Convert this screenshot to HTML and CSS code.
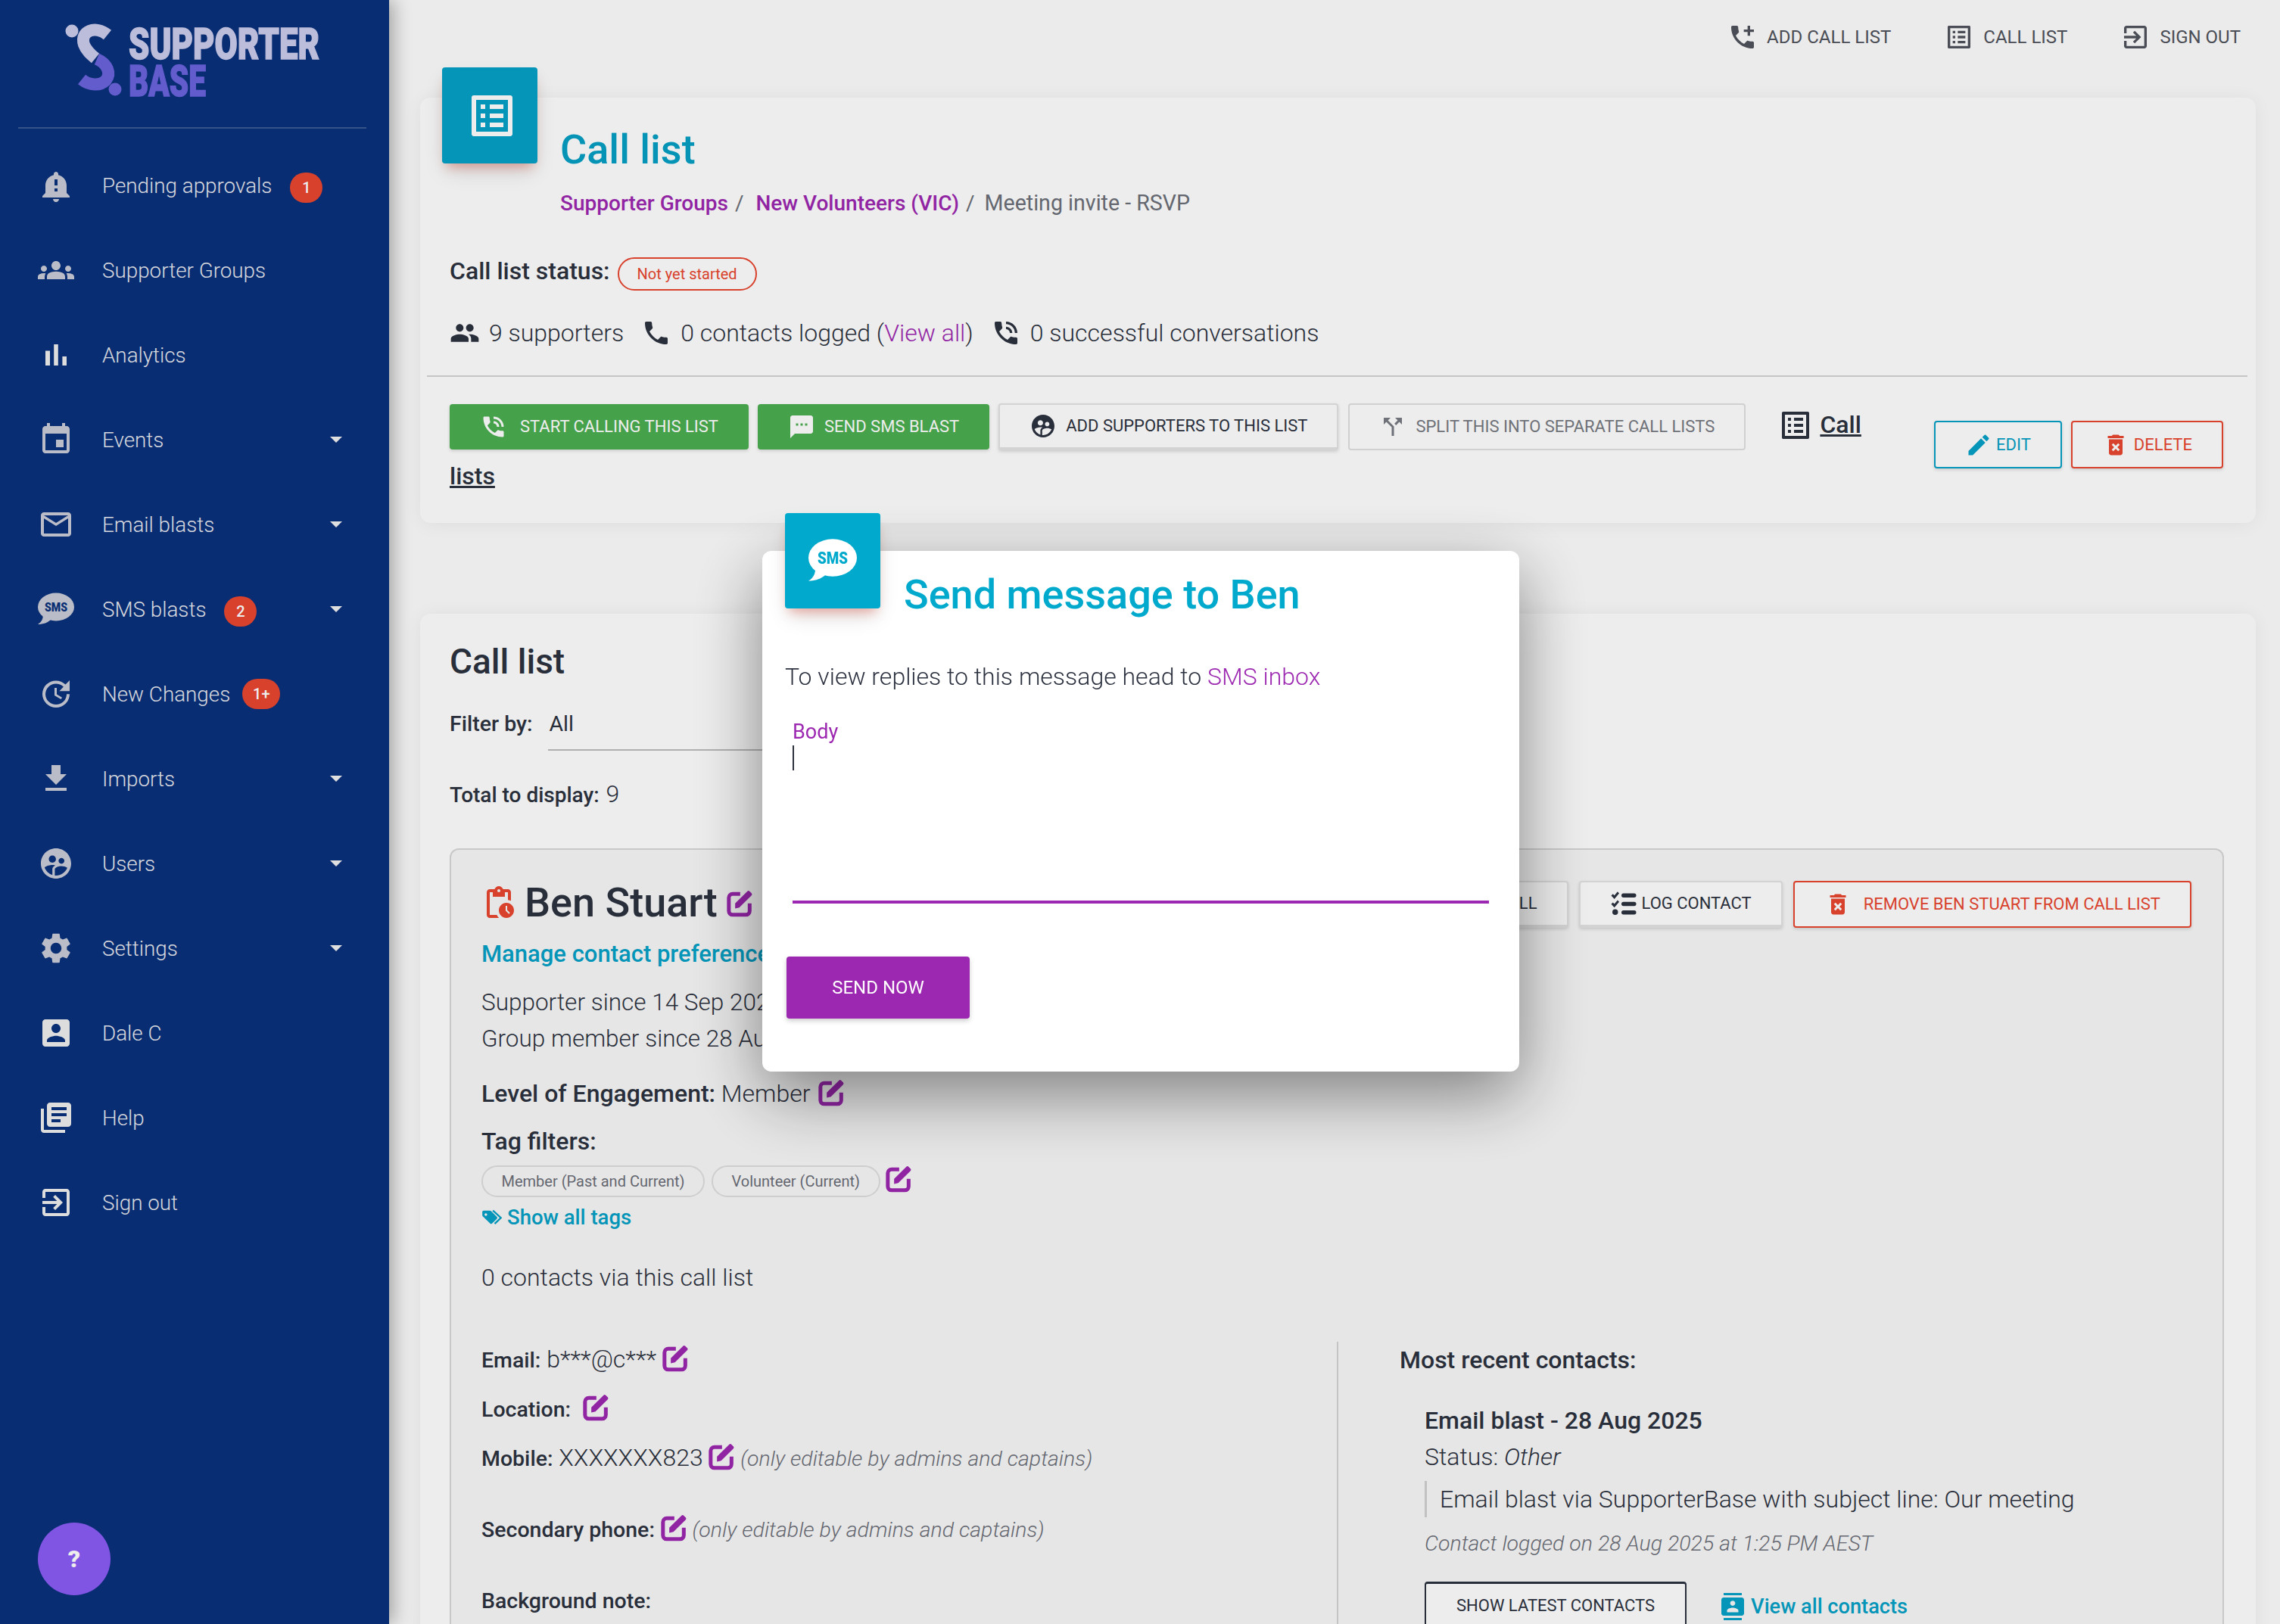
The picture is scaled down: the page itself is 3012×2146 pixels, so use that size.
FILE: index.html
```html
<!DOCTYPE html>
<html lang="en">

<head>
    <meta charset="UTF-8">
    <meta name="viewport" content="width=device-width, initial-scale=1.0">
    <title>Call list</title>
    <link rel="stylesheet" href="styles.css">
</head>

<body>

    <svg class="sprite" xmlns="http://www.w3.org/2000/svg">
        <symbol id="i-bell" viewBox="0 0 24 24"><path d="M12 23c1.1 0 1.99-.89 1.99-2h-3.98c0 1.11.89 2 1.99 2zm7-6v-5c0-3.35-2.36-6.15-5.5-6.83V4.5C13.5 3.67 12.83 3 12 3s-1.5.67-1.5 1.5v.67C7.36 5.85 5 8.65 5 12v5l-2 2v1h18v-1l-2-2zm-6-1h-2v-2h2v2zm0-4h-2V8h2v4z"/></symbol>
        <symbol id="i-groups" viewBox="0 0 24 24"><path d="M4 13c1.1 0 2-.9 2-2s-.9-2-2-2-2 .9-2 2 .9 2 2 2zm1.13 1.1c-.37-.06-.74-.1-1.13-.1-.99 0-1.93.21-2.78.58C.48 14.9 0 15.62 0 16.43V18h4.5v-1.61c0-.83.23-1.61.63-2.29zM20 13c1.1 0 2-.9 2-2s-.9-2-2-2-2 .9-2 2 .9 2 2 2zm4 3.43c0-.81-.48-1.53-1.22-1.85-.85-.37-1.79-.58-2.78-.58-.39 0-.76.04-1.13.1.4.68.63 1.46.63 2.29V18H24v-1.57zm-7.76-2.65c-1.17-.52-2.61-.9-4.24-.9-1.63 0-3.07.39-4.24.9C6.68 14.13 6 15.21 6 16.39V18h12v-1.61c0-1.18-.68-2.26-1.76-2.61zM12 12c1.66 0 3-1.34 3-3s-1.34-3-3-3-3 1.34-3 3 1.34 3 3 3z"/></symbol>
        <symbol id="i-chart" viewBox="0 0 24 24"><path d="M5 9.2h3V19H5zM10.6 5h2.8v14h-2.8zm5.6 8H19v6h-2.8z"/></symbol>
        <symbol id="i-event" viewBox="0 0 24 24"><path d="M17 12h-5v5h5v-5zM16 1v2H8V1H6v2H5c-1.11 0-1.99.9-1.99 2L3 19c0 1.1.89 2 2 2h14c1.1 0 2-.9 2-2V5c0-1.1-.9-2-2-2h-1V1h-2zm3 18H5V8h14v11z"/></symbol>
        <symbol id="i-mail" viewBox="0 0 24 24"><path d="M20 4H4c-1.1 0-1.99.9-1.99 2L2 18c0 1.1.9 2 2 2h16c1.1 0 2-.9 2-2V6c0-1.1-.9-2-2-2zm0 14H4V8l8 5 8-5v10zm-8-7L4 6h16l-8 5z"/></symbol>
        <symbol id="i-update" viewBox="0 0 24 24"><path d="M21 10.12h-6.78l2.74-2.82c-2.73-2.7-7.15-2.8-9.88-.1-2.73 2.71-2.73 7.08 0 9.79s7.15 2.71 9.88 0C18.32 15.65 19 14.08 19 12.1h2c0 1.98-.88 4.55-2.64 6.29-3.51 3.48-9.21 3.48-12.72 0-3.5-3.47-3.53-9.11-.02-12.58s9.14-3.47 12.65 0L21 3v7.12zM12.5 8v4.25l3.5 2.08-.72 1.21L11 13V8h1.5z"/></symbol>
        <symbol id="i-download" viewBox="0 0 24 24"><path d="M19 9h-4V3H9v6H5l7 7 7-7zM5 18v2h14v-2H5z"/></symbol>
        <symbol id="i-users" viewBox="0 0 24 24"><path d="M11.99 2c-5.52 0-10 4.48-10 10s4.48 10 10 10 10-4.48 10-10-4.48-10-10-10zm3.61 6.34c1.07 0 1.93.86 1.93 1.93 0 1.07-.86 1.93-1.93 1.93-1.07 0-1.93-.86-1.93-1.93-.01-1.07.86-1.93 1.93-1.93zm-6-1.58c1.3 0 2.36 1.06 2.36 2.36 0 1.3-1.06 2.36-2.36 2.36s-2.36-1.06-2.36-2.36c0-1.31 1.05-2.36 2.36-2.36zm0 9.13v3.75c-2.4-.75-4.3-2.6-5.14-4.96 1.05-1.12 3.67-1.69 5.14-1.69.53 0 1.2.08 1.9.22-1.64.87-1.9 2.02-1.9 2.68zM11.99 20c-.27 0-.53-.01-.79-.04v-4.07c0-1.42 2.94-2.13 4.4-2.13 1.07 0 2.92.39 3.84 1.15-1.17 2.97-4.06 5.09-7.45 5.09z"/></symbol>
        <symbol id="i-settings" viewBox="0 0 24 24"><path d="M19.14 12.94c.04-.3.06-.61.06-.94 0-.32-.02-.64-.07-.94l2.03-1.58a.49.49 0 0 0 .12-.61l-1.92-3.32a.488.488 0 0 0-.59-.22l-2.39.96c-.5-.38-1.03-.7-1.62-.94l-.36-2.54a.484.484 0 0 0-.48-.41h-3.84c-.24 0-.43.17-.47.41l-.36 2.54c-.59.24-1.13.57-1.62.94l-2.39-.96c-.22-.08-.47 0-.59.22L2.74 8.87c-.12.21-.08.47.12.61l2.03 1.58c-.05.3-.09.63-.09.94s.02.64.07.94l-2.03 1.58a.49.49 0 0 0-.12.61l1.92 3.32c.12.22.37.29.59.22l2.39-.96c.5.38 1.03.7 1.62.94l.36 2.54c.05.24.24.41.48.41h3.84c.24 0 .44-.17.47-.41l.36-2.54c.59-.24 1.13-.56 1.62-.94l2.39.96c.22.08.47 0 .59-.22l1.92-3.32c.12-.22.07-.47-.12-.61l-2.01-1.58zM12 15.6c-1.98 0-3.6-1.62-3.6-3.6s1.62-3.6 3.6-3.6 3.6 1.62 3.6 3.6-1.62 3.6-3.6 3.6z"/></symbol>
        <symbol id="i-account" viewBox="0 0 24 24"><path d="M3 5v14c0 1.1.89 2 2 2h14c1.1 0 2-.9 2-2V5c0-1.1-.9-2-2-2H5c-1.11 0-2 .9-2 2zm12 4c0 1.66-1.34 3-3 3s-3-1.34-3-3 1.34-3 3-3 3 1.34 3 3zm-9 8c0-2 4-3.1 6-3.1s6 1.1 6 3.1v1H6v-1z"/></symbol>
        <symbol id="i-books" viewBox="0 0 24 24"><path d="M4 6H2v14c0 1.1.9 2 2 2h14v-2H4V6zm16-4H8c-1.1 0-2 .9-2 2v12c0 1.1.9 2 2 2h12c1.1 0 2-.9 2-2V4c0-1.1-.9-2-2-2zm-1 9H9V9h10v2zm-4 4H9v-2h6v2zm4-8H9V5h10v2z"/></symbol>
        <symbol id="i-exit" viewBox="0 0 24 24"><path d="M10.09 15.59L11.5 17l5-5-5-5-1.41 1.41L12.67 11H3v2h9.67l-2.58 2.59zM19 3H5c-1.11 0-2 .9-2 2v4h2V5h14v14H5v-4H3v4c0 1.1.89 2 2 2h14c1.1 0 2-.9 2-2V5c0-1.1-.9-2-2-2z"/></symbol>
        <symbol id="i-talk" viewBox="0 0 24 24"><path d="M20 15.5c-1.25 0-2.45-.2-3.57-.57-.35-.11-.74-.03-1.02.24l-2.2 2.2c-2.83-1.44-5.15-3.75-6.59-6.59l2.2-2.21c.28-.26.36-.65.25-1C8.7 6.45 8.5 5.25 8.5 4c0-.55-.45-1-1-1H4c-.55 0-1 .45-1 1 0 9.39 7.61 17 17 17 .55 0 1-.45 1-1v-3.5c0-.55-.45-1-1-1zM19 12h2c0-4.97-4.03-9-9-9v2c3.87 0 7 3.13 7 7zm-4 0h2c0-2.76-2.24-5-5-5v2c1.66 0 3 1.34 3 3z"/></symbol>
        <symbol id="i-phone" viewBox="0 0 24 24"><path d="M6.62 10.79c1.44 2.83 3.76 5.14 6.59 6.59l2.2-2.2c.27-.27.67-.36 1.02-.24 1.12.37 2.33.57 3.57.57.55 0 1 .45 1 1V20c0 .55-.45 1-1 1-9.39 0-17-7.61-17-17 0-.55.45-1 1-1h3.5c.55 0 1 .45 1 1 0 1.25.2 2.45.57 3.57.11.35.03.74-.25 1.02l-2.2 2.2z"/></symbol>
        <symbol id="i-people" viewBox="0 0 24 24"><path d="M16 11c1.66 0 2.99-1.34 2.99-3S17.66 5 16 5c-1.66 0-3 1.34-3 3s1.34 3 3 3zm-8 0c1.66 0 2.99-1.34 2.99-3S9.66 5 8 5C6.34 5 5 6.34 5 8s1.34 3 3 3zm0 2c-2.33 0-7 1.17-7 3.5V19h14v-2.5c0-2.33-4.67-3.5-7-3.5zm8 0c-.29 0-.62.02-.97.05 1.16.84 1.97 1.97 1.97 3.45V19h6v-2.5c0-2.33-4.67-3.5-7-3.5z"/></symbol>
        <symbol id="i-chat" viewBox="0 0 24 24"><path d="M20 2H4c-1.1 0-1.99.9-1.99 2L2 22l4-4h14c1.1 0 2-.9 2-2V4c0-1.1-.9-2-2-2zM9 11H7V9h2v2zm4 0h-2V9h2v2zm4 0h-2V9h2v2z"/></symbol>
        <symbol id="i-list" viewBox="0 0 24 24"><path d="M19 5v14H5V5h14m1.1-2H3.9c-.5 0-.9.4-.9.9v16.2c0 .4.4.9.9.9h16.2c.4 0 .9-.5.9-.9V3.9c0-.5-.5-.9-.9-.9zM11 7h6v2h-6V7zm0 4h6v2h-6v-2zm0 4h6v2h-6zM7 7h2v2H7zm0 4h2v2H7zm0 4h2v2H7z"/></symbol>
        <symbol id="i-addcall" viewBox="0 0 24 24"><path d="M20 15.5c-1.25 0-2.45-.2-3.57-.57-.35-.11-.74-.03-1.02.24l-2.2 2.2c-2.83-1.44-5.15-3.75-6.59-6.59l2.2-2.21c.28-.26.36-.65.25-1C8.7 6.45 8.5 5.25 8.5 4c0-.55-.45-1-1-1H4c-.55 0-1 .45-1 1 0 9.39 7.61 17 17 17 .55 0 1-.45 1-1v-3.5c0-.55-.45-1-1-1zM21 6h-3V3h-2v3h-3v2h3v3h2V8h3z"/></symbol>
        <symbol id="i-split" viewBox="0 0 24 24"><path d="M14 4l2.29 2.29-2.88 2.88 1.42 1.42 2.88-2.88L20 10V4zm-4 0H4v6l2.29-2.29 4.71 4.7V20h2v-8.41l-5.29-5.3z"/></symbol>
        <symbol id="i-pencil" viewBox="0 0 24 24"><path d="M3 17.25V21h3.75L17.81 9.94l-3.75-3.75L3 17.25zM20.71 7.04c.39-.39.39-1.02 0-1.41l-2.34-2.34c-.39-.39-1.02-.39-1.41 0l-1.83 1.83 3.75 3.75 1.83-1.83z"/></symbol>
        <symbol id="i-delete" viewBox="0 0 24 24"><path d="M6 19c0 1.1.9 2 2 2h8c1.1 0 2-.9 2-2V7H6v12zm2.46-7.12l1.41-1.41L12 12.59l2.12-2.12 1.41 1.41L13.41 14l2.12 2.12-1.41 1.41L12 15.41l-2.12 2.12-1.41-1.41L10.59 14l-2.13-2.12zM15.5 4l-1-1h-5l-1 1H5v2h14V4z"/></symbol>
        <symbol id="i-pending" viewBox="0 0 24 24"><path d="M17 12c-2.76 0-5 2.24-5 5s2.24 5 5 5 5-2.24 5-5-2.24-5-5-5zm1.65 7.35L16.5 17.2V14h1v2.79l1.85 1.85-.7.71zM18 3h-3.18C14.4 1.84 13.3 1 12 1s-2.4.84-2.82 2H6c-1.1 0-2 .9-2 2v15c0 1.1.9 2 2 2h6.11c-.59-.57-1.07-1.25-1.42-2H6V5h2v3h8V5h2v5.08c.71.1 1.38.31 2 .6V5c0-1.1-.9-2-2-2zm-6 2c-.55 0-1-.45-1-1s.45-1 1-1 1 .45 1 1-.45 1-1 1z"/></symbol>
        <symbol id="i-contacts" viewBox="0 0 24 24"><path d="M20 0H4v2h16V0zM4 24h16v-2H4v2zM20 4H4c-1.1 0-2 .9-2 2v12c0 1.1.9 2 2 2h16c1.1 0 2-.9 2-2V6c0-1.1-.9-2-2-2zm-8 2.75c1.24 0 2.25 1.01 2.25 2.25s-1.01 2.25-2.25 2.25S9.75 10.24 9.75 9 10.76 6.75 12 6.75zM17 17H7v-1.5c0-1.67 3.33-2.5 5-2.5s5 .83 5 2.5V17z"/></symbol>
        <symbol id="i-edit" viewBox="0 0 24 24"><path d="M12.500 5H6.500A3 3 0 0 0 3.500 8v10.500a3 3 0 0 0 3 3H17a3 3 0 0 0 3-3V12.500" fill="none" stroke="currentColor" stroke-width="3"/><path d="M8.500 12.500L18.200 2.800a1.200 1.200 0 0 1 1.700 0l1.600 1.600a1.200 1.200 0 0 1 0 1.700L11.800 15.800 8.500 16.500z"/></symbol>
        <symbol id="i-checks" viewBox="0 0 24 24"><path d="M1 5l1.500-1.500 1.300 1.300L6.600 1.500 8 3 3.800 8zM1 12.500L2.500 11l1.300 1.300L6.600 9 8 10.500l-4.200 5zM4.500 17a2.500 2.500 0 1 1 0 5 2.500 2.500 0 0 1 0-5z"/><rect x="10" y="3" width="13" height="3.600" rx="1.800"/><rect x="10" y="10.500" width="13" height="3.600" rx="1.800"/><rect x="10" y="18" width="13" height="3.600" rx="1.800"/></symbol>
        <symbol id="i-tags" viewBox="0 0 24 24"><path d="M1 5.500A1.500 1.500 0 0 1 2.500 4h7c.5 0 1 .2 1.300.5l6.700 6.700c.6.600.6 1.500 0 2.100l-5.500 5.400c-.6.600-1.500.6-2.100 0L1.500 10.600C1.200 10.300 1 9.800 1 9.300zM5 7a1.500 1.500 0 1 0 0 3 1.500 1.500 0 0 0 0-3z"/><path d="M13 4l9 8.200-7 6.800" fill="none" stroke="currentColor" stroke-width="2"/></symbol>
    </svg>

    <div class="app">

        <nav class="sidebar">
            <div class="logo">
                <svg class="logo-art" viewBox="0 0 440 168" xmlns="http://www.w3.org/2000/svg">
                    <circle class="logo-light" cx="95" cy="41" r="8.500"/>
                    <path class="logo-stroke-light" d="M142 46C126 33 105 41 111 59c3 8 9 13 15 18"/>
                    <path class="logo-stroke-dark" d="M128 78c14 6 19 19 12 28-8 8-22 7-32-1"/>
                    <circle class="logo-dark" cx="152" cy="118" r="8.500"/>
                    <text class="logo-light logo-word" x="170" y="78" textLength="252" lengthAdjust="spacingAndGlyphs">SUPPORTER</text>
                    <text class="logo-dark logo-word" x="170" y="127" textLength="102" lengthAdjust="spacingAndGlyphs">BASE</text>
                </svg>
            </div>

            <a class="nav-item"><svg class="nav-icon"><use href="#i-bell"/></svg>Pending approvals<span class="badge">1</span></a>
            <a class="nav-item"><svg class="nav-icon"><use href="#i-groups"/></svg>Supporter Groups</a>
            <a class="nav-item"><svg class="nav-icon bright"><use href="#i-chart"/></svg>Analytics</a>
            <a class="nav-item"><svg class="nav-icon"><use href="#i-event"/></svg>Events<span class="caret"></span></a>
            <a class="nav-item"><svg class="nav-icon"><use href="#i-mail"/></svg>Email blasts<span class="caret"></span></a>
            <a class="nav-item">
                <svg class="nav-icon" viewBox="0 0 48 48"><ellipse cx="24" cy="21" rx="24" ry="18.500"/><path d="M7 30c0 7-2 11-7 14 7 0 13-2 18-7z"/><text class="sms-word sms-word-nav" x="9" y="27" textLength="30" lengthAdjust="spacingAndGlyphs">SMS</text></svg>
                SMS blasts<span class="badge">2</span><span class="caret"></span>
            </a>
            <a class="nav-item"><svg class="nav-icon"><use href="#i-update"/></svg>New Changes<span class="badge badge-tight">1+</span></a>
            <a class="nav-item"><svg class="nav-icon"><use href="#i-download"/></svg>Imports<span class="caret"></span></a>
            <a class="nav-item"><svg class="nav-icon"><use href="#i-users"/></svg>Users<span class="caret"></span></a>
            <a class="nav-item"><svg class="nav-icon"><use href="#i-settings"/></svg>Settings<span class="caret"></span></a>
            <a class="nav-item"><svg class="nav-icon bright"><use href="#i-account"/></svg>Dale C</a>
            <a class="nav-item"><svg class="nav-icon bright"><use href="#i-books"/></svg>Help</a>
            <a class="nav-item"><svg class="nav-icon bright"><use href="#i-exit"/></svg>Sign out</a>

            <button class="help-btn">?</button>
        </nav>

        <main class="main">

            <div class="top-nav">
                <a class="top-link"><svg class="top-icon"><use href="#i-addcall"/></svg>ADD CALL LIST</a>
                <a class="top-link"><svg class="top-icon"><use href="#i-list"/></svg>CALL LIST</a>
                <a class="top-link"><svg class="top-icon"><use href="#i-exit"/></svg>SIGN OUT</a>
            </div>

            <section class="card">
                <div class="card-head">
                    <div class="tile"><svg class="tile-icon"><use href="#i-list"/></svg></div>
                    <div>
                        <h1 class="page-title">Call list</h1>
                        <div class="crumbs">
                            <a class="link">Supporter Groups</a><span class="crumb-sep">/</span>
                            <a class="link">New Volunteers (VIC)</a><span class="crumb-sep">/</span>
                            <span class="crumb-here">Meeting invite - RSVP</span>
                        </div>
                    </div>
                </div>

                <div class="status-row">
                    <strong class="status-label">Call list status:</strong>
                    <span class="pill">Not yet started</span>
                </div>

                <div class="stats">
                    <svg class="stat-icon"><use href="#i-people"/></svg><span class="stat-text">9 supporters</span>
                    <svg class="stat-icon"><use href="#i-phone"/></svg><span class="stat-text">0 contacts logged (<a class="link">View all</a>)</span>
                    <svg class="stat-icon"><use href="#i-talk"/></svg><span class="stat-text">0 successful conversations</span>
                </div>

                <hr class="rule">

                <div class="actions">
                    <div class="actions-left">
                        <a class="btn btn-green btn-start"><svg class="btn-icon"><use href="#i-talk"/></svg>START CALLING THIS LIST</a><a class="btn btn-green"><svg class="btn-icon"><use href="#i-chat"/></svg>SEND SMS BLAST</a><a class="btn btn-plain btn-add"><svg class="btn-icon"><use href="#i-users"/></svg>ADD SUPPORTERS TO THIS LIST</a><a class="btn btn-off"><svg class="btn-icon"><use href="#i-split"/></svg>SPLIT THIS INTO SEPARATE CALL LISTS</a><svg class="call-icon"><use href="#i-list"/></svg><span class="call-link">Call</span> <span class="call-link">lists</span>
                    </div>
                    <div class="actions-right">
                        <a class="btn btn-cyan"><svg class="btn-icon"><use href="#i-pencil"/></svg>EDIT</a>
                        <a class="btn btn-red btn-delete"><svg class="btn-icon"><use href="#i-delete"/></svg>DELETE</a>
                    </div>
                </div>
            </section>

            <section class="card card-list">
                <h2 class="list-title">Call list</h2>
                <div class="filter-row">
                    <strong>Filter by:</strong>
                    <div class="filter-select">All</div>
                </div>
                <div class="total-row"><strong>Total to display:</strong> <span class="total-num">9</span></div>

                <article class="person">
                    <div class="person-head">
                        <svg class="pending-icon"><use href="#i-pending"/></svg>
                        <h3 class="person-name">Ben Stuart</h3>
                        <svg class="edit-icon"><use href="#i-edit"/></svg>
                        <div class="person-btns">
                            <a class="btn btn-plain btn-tall">CALL</a>
                            <a class="btn btn-plain btn-tall btn-log"><svg class="log-icon"><use href="#i-checks"/></svg>LOG CONTACT</a>
                            <a class="btn btn-red btn-tall btn-remove"><svg class="btn-icon"><use href="#i-delete"/></svg>REMOVE BEN STUART FROM CALL LIST</a>
                        </div>
                    </div>

                    <a class="manage-link">Manage contact preferences</a>
                    <div class="since">Supporter since 14 Sep 2021</div>
                    <div class="since">Group member since 28 Aug 2025</div>

                    <div class="level"><strong>Level of Engagement:</strong> Member <svg class="edit-icon"><use href="#i-edit"/></svg></div>

                    <div class="tag-title">Tag filters:</div>
                    <div class="chips">
                        <span class="chip">Member (Past and Current)</span>
                        <span class="chip">Volunteer (Current)</span>
                        <svg class="edit-icon chip-edit"><use href="#i-edit"/></svg>
                    </div>
                    <a class="tags-link"><svg class="tags-icon"><use href="#i-tags"/></svg>Show all tags</a>

                    <div class="via">0 contacts via this call list</div>

                    <div class="details">
                        <div class="details-left">
                            <div class="detail"><strong>Email:</strong> b***@c*** <svg class="edit-icon"><use href="#i-edit"/></svg></div>
                            <div class="detail"><strong>Location:</strong> <svg class="edit-icon edit-gap"><use href="#i-edit"/></svg></div>
                            <div class="detail"><strong>Mobile:</strong> XXXXXXX823 <svg class="edit-icon"><use href="#i-edit"/></svg> <em class="hint">(only editable by admins and captains)</em></div>
                            <div class="detail detail-far"><strong>Secondary phone:</strong> <svg class="edit-icon"><use href="#i-edit"/></svg> <em class="hint">(only editable by admins and captains)</em></div>
                            <div class="detail detail-far"><strong>Background note:</strong></div>
                        </div>
                        <div class="details-right">
                            <div class="recent-title">Most recent contacts:</div>
                            <div class="contact">
                                <div class="contact-title">Email blast - 28 Aug 2025</div>
                                <div class="contact-status">Status: <em>Other</em></div>
                                <blockquote class="contact-quote">Email blast via SupporterBase with subject line: Our meeting</blockquote>
                                <div class="contact-logged">Contact logged on 28 Aug 2025 at 1:25 PM AEST</div>
                                <div class="contact-foot">
                                    <a class="btn btn-outline">SHOW LATEST CONTACTS</a>
                                    <a class="contacts-link"><svg class="contacts-icon"><use href="#i-contacts"/></svg>View all contacts</a>
                                </div>
                            </div>
                        </div>
                    </div>
                </article>
            </section>
        </main>
    </div>

    <!-- Modal -->
    <div class="backdrop">
        <div class="modal">
            <div class="modal-head">
                <div class="tile tile-modal">
                    <svg class="tile-sms" viewBox="0 0 48 48"><ellipse cx="24" cy="21" rx="24" ry="18.500"/><path d="M7 30c0 7-2 11-7 14 7 0 13-2 18-7z"/><text class="sms-word sms-word-tile" x="9" y="27" textLength="30" lengthAdjust="spacingAndGlyphs">SMS</text></svg>
                </div>
                <h2 class="modal-title">Send message to Ben</h2>
            </div>
            <p class="modal-note">To view replies to this message head to <a class="link">SMS inbox</a></p>
            <div class="field">
                <label class="field-label">Body</label>
                <span class="field-caret"></span>
            </div>
            <button class="send-btn">SEND NOW</button>
        </div>
    </div>

</body>

</html>
```

FILE: styles.css
```css
html, body {
    height: 100%;
    overflow: hidden;
}

body {
    margin: 0;
    font-family: Roboto, "Liberation Sans", sans-serif;
    font-weight: 300;
    font-size: 32px;
    color: #2d3240;
    background: #fdfdfd;
}

strong {
    font-weight: 500;
}

.sprite {
    display: none;
}

svg {
    fill: currentColor;
    flex: none;
}

.app {
    display: flex;
    height: 100vh;
}

/* Sidebar */
.sidebar {
    flex: 0 0 514px;
    display: flex;
    flex-direction: column;
    background: #0a317b;
    color: #e6e8ef;
    font-size: 27.8px;
    box-shadow: 6px 0 22px rgba(0, 0, 0, 0.3);
    position: relative;
    z-index: 1;
}

.logo {
    height: 168px;
    margin: 0 30px 19px 24px;
    border-bottom: 2px solid #3a5a94;
}

.logo-art {
    display: block;
    width: 440px;
    height: 168px;
    margin-left: -24px;
    overflow: visible;
}

.logo-light { fill: #cbcbec; }
.logo-dark { fill: #6a63dd; }

.logo-stroke-light, .logo-stroke-dark {
    fill: none;
    stroke-width: 16px;
}

.logo-stroke-light { stroke: #cbcbec; }
.logo-stroke-dark { stroke: #6a63dd; }

.logo-word {
    font-size: 57px;
    font-weight: 900;
    stroke-width: 1.5px;
}

.logo-word.logo-light { stroke: #cbcbec; }
.logo-word.logo-dark { stroke: #6a63dd; }

.nav-item {
    display: flex;
    align-items: center;
    height: 112px;
    padding: 0 62px 0 50px;
}

.nav-icon {
    width: 48px;
    height: 48px;
    margin-right: 37px;
    color: #c9ccd8;
}

.nav-icon.bright {
    color: #eeeeee;
}

.sms-word {
    font-weight: 900;
    font-size: 16px;
}

.sms-word-nav { fill: #0a317b; }
.sms-word-tile { fill: #01aacd; }

.badge {
    display: flex;
    align-items: center;
    justify-content: center;
    min-width: 43px;
    height: 40px;
    margin: 6px 0 0 24px;
    padding: 0 4px;
    box-sizing: border-box;
    border-radius: 20px;
    background: #e9462f;
    color: #fff;
    font-size: 20px;
    font-weight: 500;
}

.badge-tight {
    margin-top: 0;
    margin-left: 16px;
    width: 50px;
}

.caret {
    margin-left: auto;
    border-left: 8px solid transparent;
    border-right: 8px solid transparent;
    border-top: 8px solid #f0f0f0;
}

.help-btn {
    width: 96px;
    height: 96px;
    margin: auto 0 38px 50px;
    border: none;
    border-radius: 50%;
    background: #8b5cf6;
    color: #fff;
    font-family: inherit;
    font-size: 32px;
    font-weight: 900;
}

/* Main column */
.main {
    flex: 1;
    min-width: 0;
    padding: 0 32px 0 41px;
}

.top-nav {
    display: flex;
    justify-content: flex-end;
    align-items: center;
    gap: 70px;
    height: 98px;
    padding-right: 20px;
    margin-bottom: 31px;
    font-size: 24px;
    font-weight: 400;
    color: #50535c;
}

.top-link {
    display: flex;
    align-items: center;
    gap: 12px;
}

.top-icon {
    width: 40px;
    height: 40px;
}

.card {
    background: #ffffff;
    border-radius: 14px;
    box-shadow: 0 2px 24px rgba(0, 0, 0, 0.06);
    padding-bottom: 28px;
}

.card-head {
    display: flex;
    gap: 30px;
    padding-left: 29px;
}

.tile {
    flex: none;
    display: flex;
    align-items: center;
    justify-content: center;
    width: 126px;
    height: 127px;
    margin-top: -40px;
    border-radius: 4px;
    background: #06a1c6;
    box-shadow: 0 10px 14px -6px rgba(233, 70, 47, 0.4), 0 14px 28px -6px rgba(0, 0, 0, 0.16);
    color: #fff;
}

.tile-icon {
    width: 72px;
    height: 72px;
    margin-left: 5px;
}

.page-title {
    margin: 37px 0 18px;
    font-size: 54px;
    line-height: 64px;
    font-weight: 500;
    color: #069fc4;
}

.link {
    color: #9c27b0;
}

.crumbs {
    display: flex;
    align-items: center;
    height: 40px;
    font-size: 28px;
    font-weight: 500;
}

.crumb-sep {
    margin: 0 16px 0 9px;
    font-weight: 400;
    color: #6c6f78;
}

.crumb-here {
    margin-left: -3px;
    font-size: 28.600px;
    font-weight: 400;
    color: #6c6f78;
}

.status-row {
    display: flex;
    align-items: flex-start;
    gap: 10px;
    margin: 52px 0 0 39px;
}

.status-label {
    font-size: 32px;
    line-height: 36px;
}

.pill {
    display: flex;
    align-items: center;
    height: 44px;
    box-sizing: border-box;
    padding: 0 24px;
    border: 2px solid #e9462f;
    border-radius: 22px;
    font-size: 20px;
    font-weight: 400;
    color: #e9462f;
}

.stats {
    display: flex;
    align-items: center;
    height: 48px;
    margin: 32px 0 0 39px;
}

.stat-icon {
    width: 40px;
    height: 40px;
    margin-right: 12px;
    color: #2d3240;
}

.stat-text {
    margin-right: 23px;
}

.rule {
    height: 2px;
    margin: 32px 11px 0 9px;
    border: none;
    background: #d4d4d4;
}

.actions {
    display: flex;
    align-items: flex-start;
    margin: 29px 43px 0 39px;
}

.actions-left {
    flex: 0 0 1880px;
    line-height: 68px;
}

.actions-right {
    display: flex;
    gap: 12px;
    margin: 29px 0 0 auto;
}

.btn {
    display: inline-flex;
    align-items: center;
    gap: 12px;
    height: 60px;
    box-sizing: border-box;
    padding: 0 40px;
    margin-right: 12px;
    border-radius: 4px;
    font-size: 22px;
    font-weight: 400;
    line-height: 1;
    white-space: nowrap;
    vertical-align: middle;
}

.btn-start {
    gap: 17px;
}

.btn-icon {
    width: 36px;
    height: 36px;
}

.btn-green {
    background: #4caf50;
    color: #fff;
    box-shadow: 0 2px 4px rgba(0, 0, 0, 0.14);
}

.btn-plain {
    height: 62px;
    background: #fff;
    border: 2px solid #e3e3e3;
    border-bottom-width: 4px;
    box-shadow: 0 2px 4px rgba(0, 0, 0, 0.14);
}

.btn-add {
    padding: 0 39px;
}

.btn-off {
    height: 62px;
    padding: 0 39px;
    margin: 0 42px 0 1px;
    background: #fff;
    border: 2px solid #e0e0e0;
    color: #777a82;
}

.btn-cyan, .btn-red {
    height: 63px;
    margin: 0;
    background: #fff;
    box-shadow: 0 2px 4px rgba(0, 0, 0, 0.14);
    gap: 5px;
}

.btn-cyan {
    padding: 0 39px;
    border: 2px solid #06a1c6;
    color: #06a1c6;
}

.btn-red {
    padding: 0 39px;
    border: 2px solid #e9462f;
    color: #e9462f;
}

.btn-delete {
    gap: 6px;
}

.call-icon {
    width: 48px;
    height: 48px;
    margin-right: 8px;
    vertical-align: -14px;
}

.call-link {
    font-weight: 500;
    text-decoration: underline;
}

.card-list {
    margin-top: 120px;
    padding: 35px 42px 0 39px;
    height: 1400px;
    box-sizing: border-box;
}

.list-title {
    margin: 0;
    font-size: 46px;
    line-height: 56px;
    font-weight: 500;
}

.filter-row {
    display: flex;
    gap: 21px;
    margin-top: 35px;
    font-size: 28.500px;
    line-height: 40px;
}

.filter-select {
    width: 500px;
    height: 53px;
    border-bottom: 2px solid #bdbdbd;
    padding-left: 1px;
    font-weight: 400;
}

.total-row {
    margin-top: 37px;
    font-size: 28px;
    line-height: 40px;
}

.total-num {
    margin-left: 2px;
    font-size: 32px;
}

.person {
    margin-top: 50px;
    padding: 40px 41px 0 40px;
    background: #f8f8f8;
    border: 2px solid #d8d8d8;
    border-radius: 12px;
    height: 1200px;
}

.person-head {
    display: flex;
    align-items: flex-start;
    height: 63px;
}

.pending-icon {
    width: 48px;
    height: 48px;
    margin: 6px 10px 0 -1px;
    color: #e9462f;
}

.person-name {
    margin: 0;
    font-size: 54px;
    line-height: 60px;
    font-weight: 500;
}

.edit-icon {
    width: 40px;
    height: 40px;
    color: #9c27b0;
    vertical-align: -7px;
}

.person-head .edit-icon {
    margin: 10px 0 0 9px;
}

.person-btns {
    display: flex;
    gap: 14px;
    margin: 1px 0 0 auto;
}

.btn-tall {
    height: 62px;
    margin: 0;
}

.btn-log {
    gap: 5px;
    padding: 0 39px;
}

.log-icon {
    width: 36px;
    height: 36px;
}

.btn-remove {
    gap: 16px;
}

.manage-link {
    display: block;
    margin-top: 15px;
    font-size: 31px;
    line-height: 40px;
    font-weight: 500;
    color: #06a1c6;
}

.since {
    font-size: 31.500px;
    line-height: 48px;
}

.manage-link + .since {
    margin-top: 20px;
}

.level {
    height: 48px;
    margin-top: 24px;
    font-size: 32px;
    line-height: 48px;
}

.tag-title {
    margin-top: 19px;
    font-size: 32px;
    line-height: 40px;
    font-weight: 500;
}

.chips {
    display: flex;
    align-items: center;
    gap: 9px;
    margin-top: 12px;
}

.chip {
    display: flex;
    align-items: center;
    height: 42px;
    box-sizing: border-box;
    padding: 0 24.500px;
    border: 2px solid #dedede;
    border-radius: 21px;
    font-size: 20px;
    font-weight: 400;
    color: #6c6f78;
}

.chip-edit {
    margin: -8px 0 0 -5px;
}

.tags-link {
    display: flex;
    align-items: center;
    gap: 6px;
    margin-top: 9px;
    font-size: 27.500px;
    line-height: 36px;
    font-weight: 500;
    color: #06a1c6;
}

.tags-icon {
    width: 28px;
    height: 28px;
}

.via {
    margin-top: 39px;
    line-height: 44px;
}

.details {
    display: flex;
    margin-top: 63px;
}

.details-left {
    flex: 0 0 1130px;
    border-right: 2px solid #d4d4d4;
    padding-top: 1px;
    height: 400px;
}

.detail {
    height: 44px;
    margin-bottom: 21px;
    line-height: 44px;
}

.detail strong {
    font-size: 28.500px;
}

.detail .edit-icon {
    margin-left: -3px;
}

.detail .edit-gap {
    margin-left: 5px;
}

.detail-far {
    margin-top: 50px;
}

.hint {
    margin-left: -3px;
    color: #6c6f78;
    font-size: 28.500px;
}

.details-right {
    padding: 2px 0 0 81px;
}

.recent-title {
    font-size: 32px;
    line-height: 44px;
    font-weight: 500;
}

.contact {
    padding: 36px 0 0 33px;
}

.contact-title {
    font-size: 32px;
    line-height: 44px;
    font-weight: 500;
}

.contact-status {
    margin-top: 6px;
    line-height: 40px;
}

.contact-quote {
    margin: 12px 0 0;
    padding-left: 17px;
    border-left: 3px solid #d0d0d0;
    line-height: 48px;
}

.contact-logged {
    margin-top: 15px;
    font-size: 28.500px;
    line-height: 40px;
    font-style: italic;
    color: #6c6f78;
}

.contact-foot {
    display: flex;
    align-items: flex-start;
    margin-top: 30px;
}

.btn-outline {
    height: 62px;
    margin: 0 43px 0 0;
    background: #fff;
    border: 2px solid #2d3240;
    border-top-width: 3px;
}

.contacts-link {
    display: flex;
    align-items: center;
    gap: 6px;
    height: 66px;
    font-size: 27.200px;
    font-weight: 500;
    color: #06a1c6;
}

.contacts-icon {
    width: 36px;
    height: 36px;
}

/* Modal */
.backdrop {
    position: fixed;
    top: 0;
    left: 0;
    right: 0;
    bottom: 0;
    z-index: 2;
    display: flex;
    justify-content: center;
    align-items: center;
    padding: 0 0 2px 2px;
    background: rgba(0, 0, 0, 0.07);
}

.modal {
    width: 1000px;
    box-sizing: border-box;
    padding: 0 30px 70px;
    background: #fff;
    border-radius: 12px;
    box-shadow: 0 30px 90px rgba(0, 0, 0, 0.45);
}

.modal-head {
    display: flex;
    gap: 31px;
}

.tile-modal {
    height: 126px;
    margin-top: -50px;
    background: #01aacd;
}

.tile-sms {
    width: 64px;
    height: 64px;
}

.modal-title {
    margin: 26px 0 0;
    font-size: 54px;
    line-height: 64px;
    font-weight: 500;
    color: #01aacd;
}

.modal-note {
    margin: 54px 0 0;
    line-height: 44px;
}

.field {
    display: flex;
    flex-direction: column;
    align-items: flex-start;
    width: 920px;
    height: 245px;
    box-sizing: border-box;
    margin: 33px 0 0 10px;
    border-bottom: 4px solid #9c27b0;
}

.field-label {
    font-size: 27px;
    line-height: 36px;
    font-weight: 400;
    color: #9c27b0;
}

.field-caret {
    width: 2px;
    height: 33px;
    background: #2d3240;
}

.send-btn {
    display: block;
    width: 242px;
    height: 82px;
    margin: 70px 0 0 2px;
    border: none;
    border-radius: 4px;
    background: #9c27b0;
    color: #fff;
    box-shadow: 0 3px 6px rgba(0, 0, 0, 0.2);
    font-family: inherit;
    font-size: 24px;
    font-weight: 400;
}
```
